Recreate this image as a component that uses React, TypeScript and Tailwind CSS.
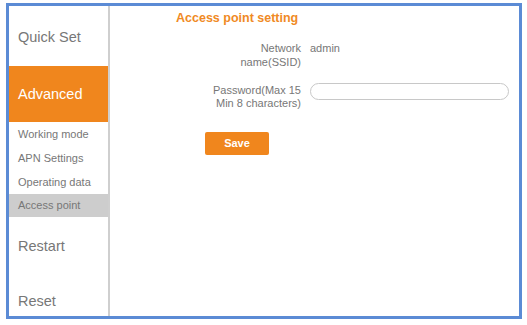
import React from "react";

export default function App() {
  const font = { fontFamily: '"Liberation Sans", Arial, sans-serif' };
  return (
    <div className="w-[527px] h-[325px] bg-white overflow-hidden" style={font}>
      <div className="ml-[6px] mt-[3px] w-[516px] h-[316px] border-[3px] border-[#5b8bd5] flex overflow-hidden bg-white">
        {/* sidebar */}
        <div className="w-[101px] shrink-0 border-r-2 border-[#cfcfcf] flex flex-col text-[#777]">
          <div className="h-[60px] shrink-0 flex items-center pl-[9px] text-[14.5px] pt-[4px]">Quick Set</div>
          <div className="h-[56px] shrink-0 flex items-center pl-[9px] text-[14.5px] bg-[#f0861d] text-white pt-[1px]">Advanced</div>
          <div className="h-[24px] shrink-0 flex items-center pl-[9px] text-[11px]">Working mode</div>
          <div className="h-[24px] shrink-0 flex items-center pl-[9px] text-[11px]">APN Settings</div>
          <div className="h-[24px] shrink-0 flex items-center pl-[9px] text-[11px]">Operating data</div>
          <div className="h-[23px] shrink-0 flex items-center pl-[9px] text-[11px] bg-[#cdcdcd]">Access point</div>
          <div className="h-[56px] shrink-0 flex items-center pl-[9px] text-[14.5px] pt-[4px]">Restart</div>
          <div className="h-[56px] shrink-0 flex items-center pl-[9px] text-[14.5px] pt-[1px]">Reset</div>
        </div>
        {/* content */}
        <div className="flex-1 relative text-[#777]">
          <div className="ml-[66px] mt-[3px] text-[12.5px] font-bold text-[#f08a24]">Access point setting</div>
          <div className="flex mt-[13px]">
            <div className="w-[191px] text-right text-[11px] leading-[14px]">
              Network<br />name(SSID)
            </div>
            <div className="ml-[9px] text-[11px] leading-[14px]">admin</div>
          </div>
          <div className="flex mt-[15px] items-start">
            <div className="w-[191px] text-right text-[11px] leading-[13px]">
              Password(Max 15<br />Min 8 characters)
            </div>
            <div className="ml-[9px] -mt-[1px] w-[199px] h-[17px] rounded-full border border-[#c8c8c8] bg-white" />
          </div>
          <div className="ml-[95px] mt-[22px] w-[64px] h-[23px] rounded-[2px] bg-[#f0861d] text-white text-[11px] font-bold flex items-center justify-center">
            Save
          </div>
        </div>
      </div>
    </div>
  );
}
